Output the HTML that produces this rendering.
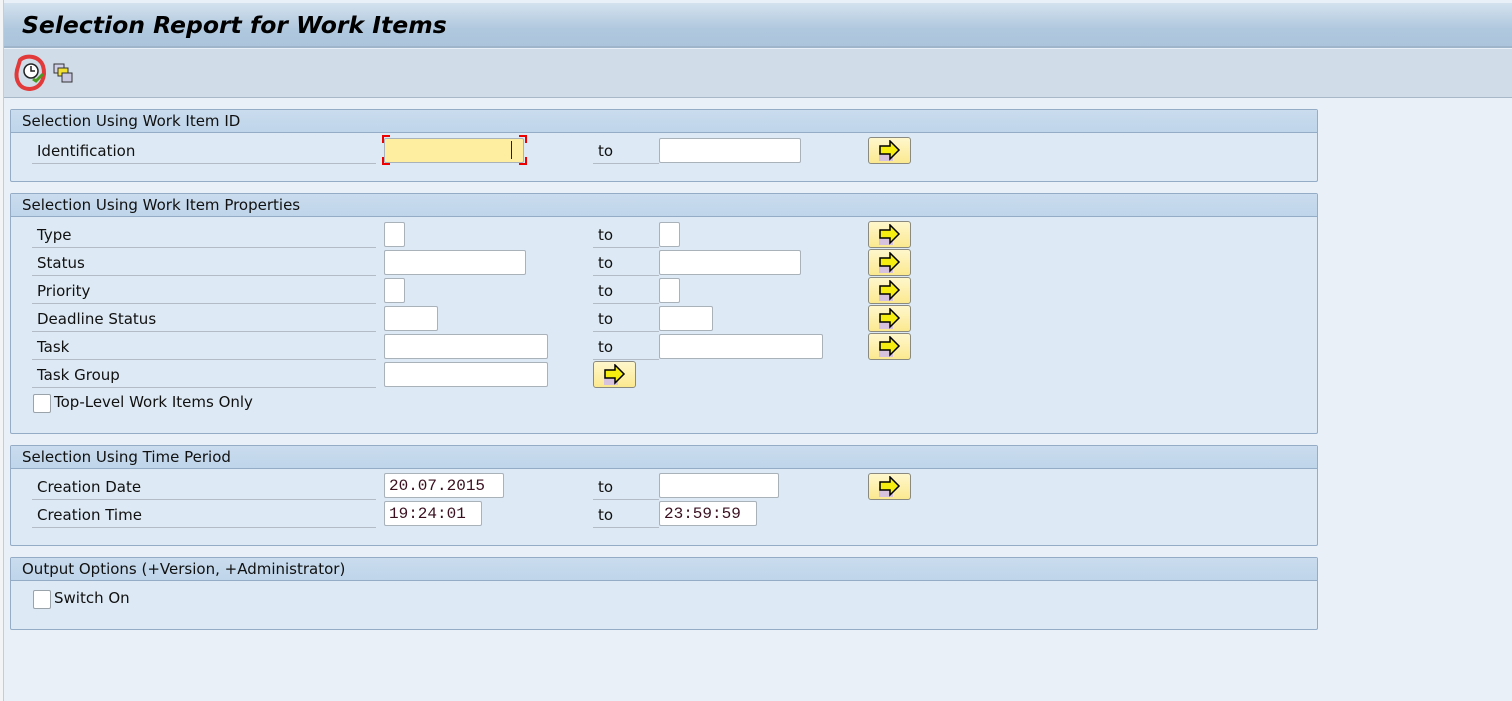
<!DOCTYPE html>
<html><head><meta charset="utf-8"><style>
*{box-sizing:border-box;margin:0;padding:0}
body{width:1512px;height:701px;overflow:hidden;background:#e9f0f7;font-family:"DejaVu Sans",sans-serif;font-size:15px;color:#111;position:relative}
.a{position:absolute}
#title{left:4px;top:3px;width:1508px;height:45px;background:linear-gradient(#d4e2ee,#b0c8de 60%,#adc5dc);border-bottom:2px solid #9fb5ca}
#title span{position:absolute;left:18px;top:8px;font-size:23.5px;font-weight:bold;font-style:italic;color:#000}
#tb{left:4px;top:49px;width:1508px;height:49px;background:#d0dde8;border-bottom:1px solid #a8b8c8}
#lb{left:0;top:0;width:4px;height:701px;background:#f2f4f6;border-right:1px solid #c4ccd4}
.panel{position:absolute;left:10px;width:1308px;border:1px solid #94acc6;background:#dde9f4;border-radius:2px}
.ph{height:23px;background:linear-gradient(#cadcee,#bfd5ea);border-bottom:1px solid #94acc6;padding:2px 0 0 11px;color:#111}
.lbl{position:absolute;left:32px;width:344px;height:28px;border-bottom:1px solid #b3bcc6;padding:6px 0 0 5px}
.to{position:absolute;left:593px;width:66px;height:28px;border-bottom:1px solid #b3bcc6;padding:6px 0 0 5px}
.in{position:absolute;height:25px;background:#fff;border:1px solid #a9b1b9;border-radius:2px;font-family:"Liberation Mono",monospace;font-size:16px;color:#3a1020;padding:3px 0 0 4px}
.btn{position:absolute;width:43px;height:27px;border:1px solid #8a8a80;border-radius:3px;background:linear-gradient(#fff7cc,#fbe98f)}
.btn svg{position:absolute;left:9px;top:2px}
.cb{position:absolute;width:18px;height:19px;background:#fff;border:1px solid #9aa2aa;border-radius:2px}
</style></head><body>
<div id="lb" class="a"></div>
<div id="title" class="a"><span>Selection Report for Work Items</span></div>
<div id="tb" class="a">
<svg class="a" style="left:6px;top:3px" width="70" height="40" viewBox="0 0 70 40">
<path d="M10 8C16 2 30 4 33 14C36 24 32 36 20 37C9 37 5 28 7 18Z" fill="none" stroke="#e23a3a" stroke-width="4"/>
<circle cx="21" cy="19" r="7" fill="#fff" stroke="#222" stroke-width="1.5"/>
<path d="M21 14v5h4" stroke="#222" stroke-width="1.5" fill="none"/>
<path d="M23 27l3 2 7-7" stroke="#4a9a20" stroke-width="3" fill="none"/>
<rect x="44" y="12" width="10" height="9" fill="#d0d0e8" stroke="#333"/>
<rect x="48" y="16" width="10" height="8" fill="#f2e030" stroke="#333"/>
<rect x="52" y="21" width="10" height="9" fill="#c8c8e0" stroke="#333"/>
</svg>
</div>

<div class="panel" style="top:109px;height:73px"><div class="ph">Selection Using Work Item ID</div></div>
<div class="panel" style="top:193px;height:241px"><div class="ph">Selection Using Work Item Properties</div></div>
<div class="panel" style="top:445px;height:101px"><div class="ph">Selection Using Time Period</div></div>
<div class="panel" style="top:557px;height:73px"><div class="ph">Output Options (+Version, +Administrator)</div></div>

<div class="lbl" style="top:136px">Identification</div>
<div class="in" style="left:384px;top:138px;width:140px;background:#fdeea0"></div>
<div class="a" style="left:382px;top:135px;width:8px;height:8px;border-left:2px solid #e00;border-top:2px solid #e00"></div>
<div class="a" style="left:519px;top:135px;width:8px;height:8px;border-right:2px solid #e00;border-top:2px solid #e00"></div>
<div class="a" style="left:382px;top:157px;width:8px;height:8px;border-left:2px solid #e00;border-bottom:2px solid #e00"></div>
<div class="a" style="left:519px;top:157px;width:8px;height:8px;border-right:2px solid #e00;border-bottom:2px solid #e00"></div>
<div class="a" style="left:511px;top:141px;width:1px;height:18px;background:#222"></div>
<div class="to" style="top:136px">to</div>
<div class="in" style="left:659px;top:138px;width:142px"></div>

<div class="lbl" style="top:220px">Type</div>
<div class="in" style="left:384px;top:222px;width:21px"></div>
<div class="to" style="top:220px">to</div>
<div class="in" style="left:659px;top:222px;width:21px"></div>

<div class="lbl" style="top:248px">Status</div>
<div class="in" style="left:384px;top:250px;width:142px"></div>
<div class="to" style="top:248px">to</div>
<div class="in" style="left:659px;top:250px;width:142px"></div>

<div class="lbl" style="top:276px">Priority</div>
<div class="in" style="left:384px;top:278px;width:21px"></div>
<div class="to" style="top:276px">to</div>
<div class="in" style="left:659px;top:278px;width:21px"></div>

<div class="lbl" style="top:304px">Deadline Status</div>
<div class="in" style="left:384px;top:306px;width:54px"></div>
<div class="to" style="top:304px">to</div>
<div class="in" style="left:659px;top:306px;width:54px"></div>

<div class="lbl" style="top:332px">Task</div>
<div class="in" style="left:384px;top:334px;width:164px"></div>
<div class="to" style="top:332px">to</div>
<div class="in" style="left:659px;top:334px;width:164px"></div>

<div class="lbl" style="top:360px">Task Group</div>
<div class="in" style="left:384px;top:362px;width:164px"></div>

<div class="cb" style="left:33px;top:394px"></div>
<div class="a" style="left:54px;top:393px">Top-Level Work Items Only</div>

<div class="lbl" style="top:472px">Creation Date</div>
<div class="in" style="left:384px;top:473px;width:120px">20.07.2015</div>
<div class="to" style="top:472px">to</div>
<div class="in" style="left:659px;top:473px;width:120px"></div>

<div class="lbl" style="top:500px">Creation Time</div>
<div class="in" style="left:384px;top:501px;width:98px">19:24:01</div>
<div class="to" style="top:500px">to</div>
<div class="in" style="left:659px;top:501px;width:98px">23:59:59</div>

<div class="cb" style="left:33px;top:590px"></div>
<div class="a" style="left:54px;top:589px">Switch On</div>

<div class="btn" style="left:868px;top:137px"><svg width="24" height="22"><rect x="1" y="11" width="14" height="10" fill="#d6c2de"/><path d="M2 6h10V1l9 9-9 9v-5H2z" fill="#f5ee10" stroke="#000" stroke-width="1.5"/></svg></div>
<div class="btn" style="left:868px;top:221px"><svg width="24" height="22"><rect x="1" y="11" width="14" height="10" fill="#d6c2de"/><path d="M2 6h10V1l9 9-9 9v-5H2z" fill="#f5ee10" stroke="#000" stroke-width="1.5"/></svg></div>
<div class="btn" style="left:868px;top:249px"><svg width="24" height="22"><rect x="1" y="11" width="14" height="10" fill="#d6c2de"/><path d="M2 6h10V1l9 9-9 9v-5H2z" fill="#f5ee10" stroke="#000" stroke-width="1.5"/></svg></div>
<div class="btn" style="left:868px;top:277px"><svg width="24" height="22"><rect x="1" y="11" width="14" height="10" fill="#d6c2de"/><path d="M2 6h10V1l9 9-9 9v-5H2z" fill="#f5ee10" stroke="#000" stroke-width="1.5"/></svg></div>
<div class="btn" style="left:868px;top:305px"><svg width="24" height="22"><rect x="1" y="11" width="14" height="10" fill="#d6c2de"/><path d="M2 6h10V1l9 9-9 9v-5H2z" fill="#f5ee10" stroke="#000" stroke-width="1.5"/></svg></div>
<div class="btn" style="left:868px;top:333px"><svg width="24" height="22"><rect x="1" y="11" width="14" height="10" fill="#d6c2de"/><path d="M2 6h10V1l9 9-9 9v-5H2z" fill="#f5ee10" stroke="#000" stroke-width="1.5"/></svg></div>
<div class="btn" style="left:593px;top:361px"><svg width="24" height="22"><rect x="1" y="11" width="14" height="10" fill="#d6c2de"/><path d="M2 6h10V1l9 9-9 9v-5H2z" fill="#f5ee10" stroke="#000" stroke-width="1.5"/></svg></div>
<div class="btn" style="left:868px;top:473px"><svg width="24" height="22"><rect x="1" y="11" width="14" height="10" fill="#d6c2de"/><path d="M2 6h10V1l9 9-9 9v-5H2z" fill="#f5ee10" stroke="#000" stroke-width="1.5"/></svg></div>
</body></html>
